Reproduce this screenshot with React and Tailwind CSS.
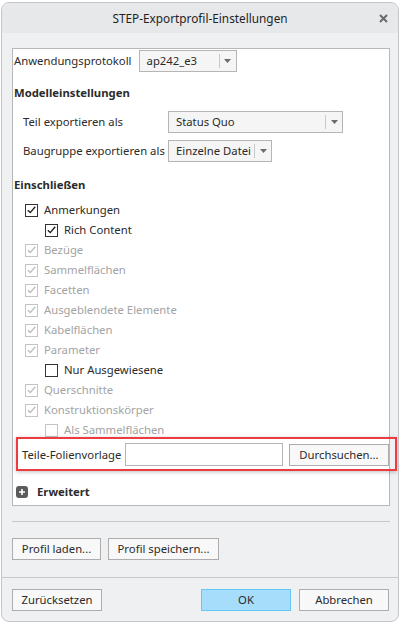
import React from "react";

const font = { fontFamily: '"Noto Sans", "Open Sans", sans-serif', fontSize: "11.3px", lineHeight: "16px" };

function Arrow() {
  return (
    <svg width="7" height="4" viewBox="0 0 7 4">
      <path d="M0 0h7L3.5 4z" fill="#6b6b6b" />
    </svg>
  );
}

function Dropdown({ value, width }) {
  return (
    <div className={`flex h-[22px] shrink-0 items-stretch border border-[#b5b5b5] bg-[#f5f5f5] ${width}`}>
      <div className="flex flex-1 items-center whitespace-nowrap pl-[7px] text-[#2b2b2b]">{value}</div>
      <div className="my-[3px] w-px bg-[#c9c9c9]" />
      <div className="flex w-[16px] items-center justify-center">
        <Arrow />
      </div>
    </div>
  );
}

function Check({ checked, disabled }) {
  return (
    <div
      className={`flex h-[13px] w-[13px] shrink-0 items-center justify-center border bg-white ${
        disabled ? "border-[#c4c4c4]" : "border-[#333333]"
      }`}
    >
      {checked && (
        <svg width="9" height="8" viewBox="0 0 9 8">
          <path
            d="M0.8 4.2L3.3 6.6L8.2 0.8"
            fill="none"
            stroke={disabled ? "#bdbdbd" : "#222222"}
            strokeWidth="1.4"
          />
        </svg>
      )}
    </div>
  );
}

function CheckRow({ label, checked, disabled, indent }) {
  return (
    <div className={`flex h-[20px] items-center gap-[6px] ${indent ? "pl-[32px]" : "pl-[12px]"}`}>
      <Check checked={checked} disabled={disabled} />
      <span className={`whitespace-nowrap ${disabled ? "text-[#a3a3a3]" : "text-[#2b2b2b]"}`}>{label}</span>
    </div>
  );
}

function Btn({ children, width, primary }) {
  return (
    <div
      className={`flex h-[22px] shrink-0 items-center justify-center whitespace-nowrap border text-[#2b2b2b] ${width} ${
        primary ? "border-[#68c6f6] bg-[#a6ddfb]" : "border-[#adadad] bg-[#f8f8f8]"
      }`}
    >
      {children}
    </div>
  );
}

const items = [
  { label: "Anmerkungen", checked: true },
  { label: "Rich Content", checked: true, indent: true },
  { label: "Bezüge", checked: true, disabled: true },
  { label: "Sammelflächen", checked: true, disabled: true },
  { label: "Facetten", checked: true, disabled: true },
  { label: "Ausgeblendete Elemente", checked: true, disabled: true },
  { label: "Kabelflächen", checked: true, disabled: true },
  { label: "Parameter", checked: true, disabled: true },
  { label: "Nur Ausgewiesene", checked: false, indent: true },
  { label: "Querschnitte", checked: true, disabled: true },
  { label: "Konstruktionskörper", checked: true, disabled: true },
  { label: "Als Sammelflächen", checked: false, indent: true, disabled: true },
];

export default function App() {
  return (
    <div className="h-[625px] w-[403px] bg-white pl-[1px] pt-[2px]" style={font}>
      <div className="flex h-[620px] w-[398px] flex-col overflow-hidden rounded-[8px] border border-[#c6c6c8] bg-[#eff0f2]">
        {/* Titelleiste */}
        <div className="relative flex h-[30px] shrink-0 items-center justify-center bg-[#e7e8ea] text-[11.8px] text-[#1f1f1f]">
          STEP-Exportprofil-Einstellungen
          <svg className="absolute right-[10px] top-[11px]" width="9" height="9" viewBox="0 0 9 9">
            <path d="M1 1l7 7M8 1L1 8" stroke="#6b6b6b" strokeWidth="2" />
          </svg>
        </div>

        {/* Hauptbereich */}
        <div className="relative ml-[10px] mt-[15px] h-[458px] w-[378px] shrink-0 border border-[#b8b8b8] bg-white pt-px">
          <div className="flex items-center gap-[7px] pl-px">
            <span className="whitespace-nowrap text-[#2b2b2b]">Anwendungsprotokoll</span>
            <Dropdown value="ap242_e3" width="w-[98px]" />
          </div>

          <div className="mt-[13px] h-[16px] pl-px font-bold text-[#2b2b2b]">Modelleinstellungen</div>

          <div className="mt-[10px] flex items-center pl-[10px]">
            <span className="w-[145px] shrink-0 whitespace-nowrap text-[#2b2b2b]">Teil exportieren als</span>
            <Dropdown value="Status Quo" width="w-[175px]" />
          </div>
          <div className="mt-[7px] flex items-center pl-[10px]">
            <span className="w-[145px] shrink-0 whitespace-nowrap text-[#2b2b2b]">Baugruppe exportieren als</span>
            <Dropdown value="Einzelne Datei" width="w-[104px]" />
          </div>

          <div className="mt-[15px] h-[16px] pl-px font-bold text-[#2b2b2b]">Einschließen</div>

          <div className="mt-[7px] flex flex-col">
            {items.map((it) => (
              <CheckRow key={it.label} {...it} />
            ))}
          </div>

          <div className="mt-[3px] flex items-center pl-[9px]">
            <span className="w-[103px] shrink-0 whitespace-nowrap text-[#2b2b2b]">Teile-Folienvorlage</span>
            <div className="h-[23px] w-[158px] shrink-0 border border-[#b5b5b5] bg-white" />
            <div className="ml-[6px]">
              <Btn width="w-[100px]">Durchsuchen...</Btn>
            </div>
          </div>

          <div className="mt-[18px] flex h-[16px] items-center gap-[9px] pl-[3px]">
            <div className="flex h-[12px] w-[12px] items-center justify-center rounded-[3px] bg-[#5b5b5b]">
              <svg width="8" height="8" viewBox="0 0 8 8">
                <path d="M4 1v6M1 4h6" stroke="#ffffff" strokeWidth="1.6" />
              </svg>
            </div>
            <span className="font-bold text-[#2b2b2b]">Erweitert</span>
          </div>

          {/* Markierung */}
          <div className="pointer-events-none absolute left-[3px] top-[388px] h-[34px] w-[381px] border-2 border-[#ee3b3f] shadow-[0_1px_4px_rgba(0,0,0,0.25)]" />
        </div>

        <div className="ml-[10px] mt-[15px] h-px w-[378px] shrink-0 bg-[#c8c8ca]" />

        <div className="ml-[10px] mt-[16px] flex gap-[7px]">
          <Btn width="w-[89px]">Profil laden...</Btn>
          <Btn width="w-[111px]">Profil speichern...</Btn>
        </div>

        <div className="mt-[17px] h-px w-full shrink-0 bg-[#c8c8ca]" />

        <div className="ml-[10px] mt-[11px] flex">
          <Btn width="w-[90px]">Zurücksetzen</Btn>
          <div className="ml-[99px]">
            <Btn width="w-[90px]" primary>
              OK
            </Btn>
          </div>
          <div className="ml-[8px]">
            <Btn width="w-[90px]">Abbrechen</Btn>
          </div>
        </div>
      </div>
    </div>
  );
}
